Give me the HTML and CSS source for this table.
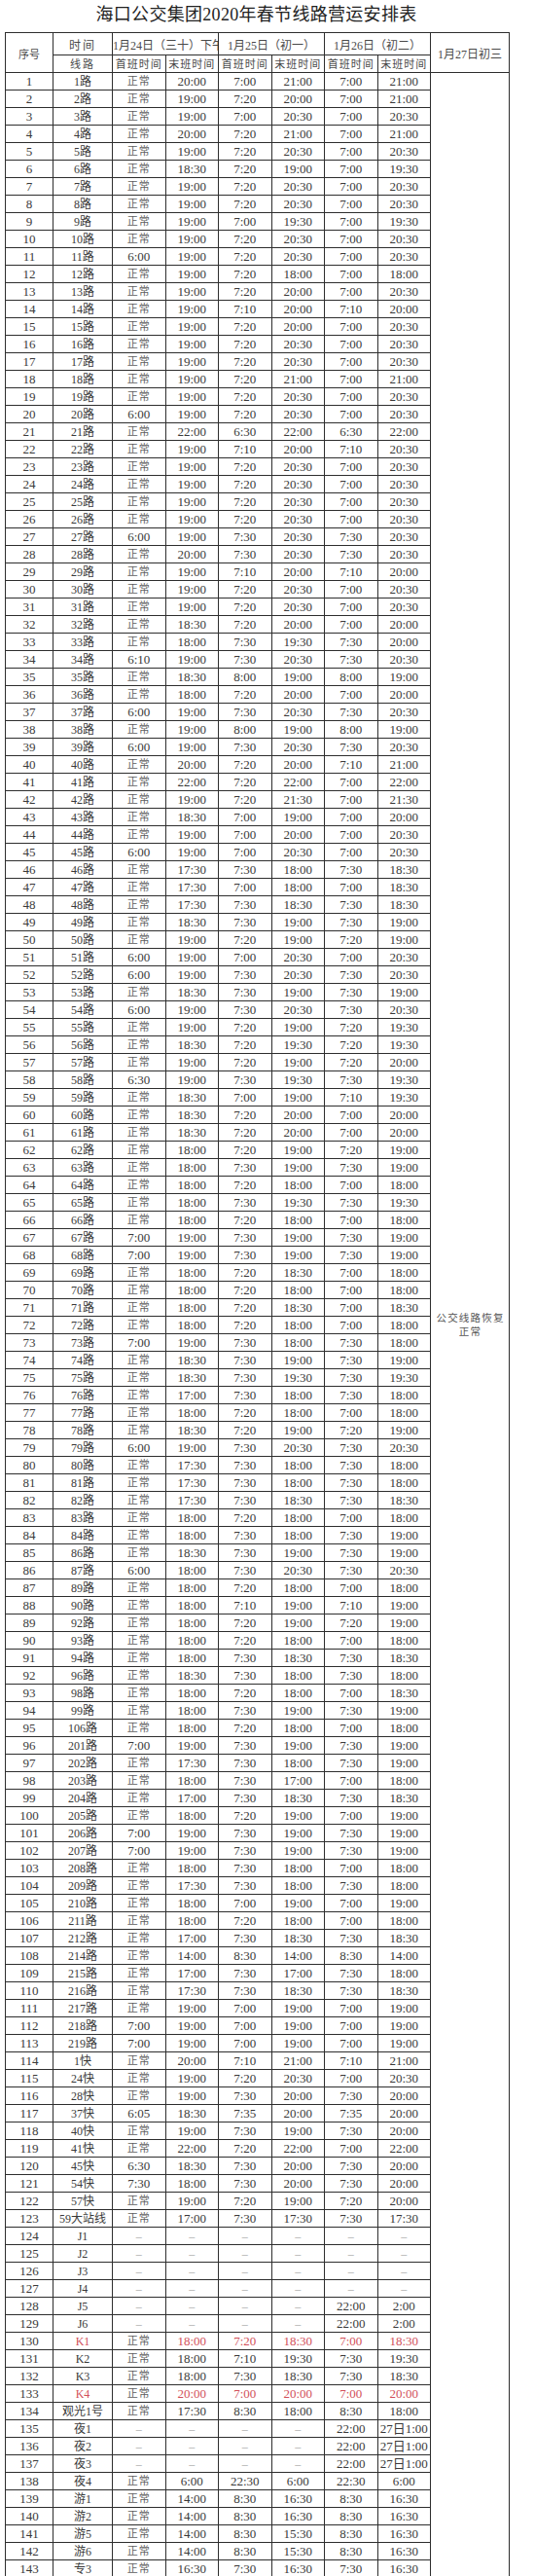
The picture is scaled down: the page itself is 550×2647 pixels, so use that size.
FILE: index.html
```html
<!DOCTYPE html>
<html lang="zh-CN">
<head>
<meta charset="utf-8">
<title>海口公交集团2020年春节线路营运安排表</title>
<link rel="stylesheet" href="styles.css">
</head>
<body>
<div class="sheet">
<h1 class="title">海口公交集团2020年春节线路营运安排表</h1>
<table class="grid">
<colgroup><col class="w-no"><col class="w-route"><col class="w-t"><col class="w-t"><col class="w-t"><col class="w-t"><col class="w-t"><col class="w-t"><col class="w-last"></colgroup>
<thead>
<tr class="h1"><th rowspan="2" class="hd-no">序号</th><th class="hd-sp">时间</th><th colspan="2" class="hd-day clip">1月24日（三十）下午</th><th colspan="2" class="hd-day">1月25日（初一）</th><th colspan="2" class="hd-day">1月26日（初二）</th><th rowspan="2" class="hd-day mid">1月27日初三</th></tr>
<tr class="h2"><th class="hd-sp">线路</th><th class="hd-sub">首班时间</th><th class="hd-sub">末班时间</th><th class="hd-sub">首班时间</th><th class="hd-sub">末班时间</th><th class="hd-sub">首班时间</th><th class="hd-sub">末班时间</th></tr>
</thead>
<tbody>
<tr><td>1</td><td class="rt">1路</td><td class="n">正常</td><td>20:00</td><td>7:00</td><td>21:00</td><td>7:00</td><td>21:00</td><td class="note" rowspan="143">公交线路恢复<br>正常</td></tr>
<tr><td>2</td><td class="rt">2路</td><td class="n">正常</td><td>19:00</td><td>7:20</td><td>20:00</td><td>7:00</td><td>21:00</td></tr>
<tr><td>3</td><td class="rt">3路</td><td class="n">正常</td><td>19:00</td><td>7:00</td><td>20:30</td><td>7:00</td><td>20:30</td></tr>
<tr><td>4</td><td class="rt">4路</td><td class="n">正常</td><td>20:00</td><td>7:20</td><td>21:00</td><td>7:00</td><td>21:00</td></tr>
<tr><td>5</td><td class="rt">5路</td><td class="n">正常</td><td>19:00</td><td>7:20</td><td>20:30</td><td>7:00</td><td>20:30</td></tr>
<tr><td>6</td><td class="rt">6路</td><td class="n">正常</td><td>18:30</td><td>7:20</td><td>19:00</td><td>7:00</td><td>19:30</td></tr>
<tr><td>7</td><td class="rt">7路</td><td class="n">正常</td><td>19:00</td><td>7:20</td><td>20:30</td><td>7:00</td><td>20:30</td></tr>
<tr><td>8</td><td class="rt">8路</td><td class="n">正常</td><td>19:00</td><td>7:20</td><td>20:30</td><td>7:00</td><td>20:30</td></tr>
<tr><td>9</td><td class="rt">9路</td><td class="n">正常</td><td>19:00</td><td>7:00</td><td>19:30</td><td>7:00</td><td>19:30</td></tr>
<tr><td>10</td><td class="rt">10路</td><td class="n">正常</td><td>19:00</td><td>7:20</td><td>20:30</td><td>7:00</td><td>20:30</td></tr>
<tr><td>11</td><td class="rt">11路</td><td>6:00</td><td>19:00</td><td>7:20</td><td>20:30</td><td>7:00</td><td>20:30</td></tr>
<tr><td>12</td><td class="rt">12路</td><td class="n">正常</td><td>19:00</td><td>7:20</td><td>18:00</td><td>7:00</td><td>18:00</td></tr>
<tr><td>13</td><td class="rt">13路</td><td class="n">正常</td><td>19:00</td><td>7:20</td><td>20:00</td><td>7:00</td><td>20:30</td></tr>
<tr><td>14</td><td class="rt">14路</td><td class="n">正常</td><td>19:00</td><td>7:10</td><td>20:00</td><td>7:10</td><td>20:00</td></tr>
<tr><td>15</td><td class="rt">15路</td><td class="n">正常</td><td>19:00</td><td>7:20</td><td>20:00</td><td>7:00</td><td>20:30</td></tr>
<tr><td>16</td><td class="rt">16路</td><td class="n">正常</td><td>19:00</td><td>7:20</td><td>20:30</td><td>7:00</td><td>20:30</td></tr>
<tr><td>17</td><td class="rt">17路</td><td class="n">正常</td><td>19:00</td><td>7:20</td><td>20:30</td><td>7:00</td><td>20:30</td></tr>
<tr><td>18</td><td class="rt">18路</td><td class="n">正常</td><td>19:00</td><td>7:20</td><td>21:00</td><td>7:00</td><td>21:00</td></tr>
<tr><td>19</td><td class="rt">19路</td><td class="n">正常</td><td>19:00</td><td>7:20</td><td>20:30</td><td>7:00</td><td>20:30</td></tr>
<tr><td>20</td><td class="rt">20路</td><td>6:00</td><td>19:00</td><td>7:20</td><td>20:30</td><td>7:00</td><td>20:30</td></tr>
<tr><td>21</td><td class="rt">21路</td><td class="n">正常</td><td>22:00</td><td>6:30</td><td>22:00</td><td>6:30</td><td>22:00</td></tr>
<tr><td>22</td><td class="rt">22路</td><td class="n">正常</td><td>19:00</td><td>7:10</td><td>20:00</td><td>7:10</td><td>20:30</td></tr>
<tr><td>23</td><td class="rt">23路</td><td class="n">正常</td><td>19:00</td><td>7:20</td><td>20:30</td><td>7:00</td><td>20:30</td></tr>
<tr><td>24</td><td class="rt">24路</td><td class="n">正常</td><td>19:00</td><td>7:20</td><td>20:30</td><td>7:00</td><td>20:30</td></tr>
<tr><td>25</td><td class="rt">25路</td><td class="n">正常</td><td>19:00</td><td>7:20</td><td>20:30</td><td>7:00</td><td>20:30</td></tr>
<tr><td>26</td><td class="rt">26路</td><td class="n">正常</td><td>19:00</td><td>7:20</td><td>20:30</td><td>7:00</td><td>20:30</td></tr>
<tr><td>27</td><td class="rt">27路</td><td>6:00</td><td>19:00</td><td>7:30</td><td>20:30</td><td>7:30</td><td>20:30</td></tr>
<tr><td>28</td><td class="rt">28路</td><td class="n">正常</td><td>20:00</td><td>7:30</td><td>20:30</td><td>7:30</td><td>20:30</td></tr>
<tr><td>29</td><td class="rt">29路</td><td class="n">正常</td><td>19:00</td><td>7:10</td><td>20:00</td><td>7:10</td><td>20:00</td></tr>
<tr><td>30</td><td class="rt">30路</td><td class="n">正常</td><td>19:00</td><td>7:20</td><td>20:30</td><td>7:00</td><td>20:30</td></tr>
<tr><td>31</td><td class="rt">31路</td><td class="n">正常</td><td>19:00</td><td>7:20</td><td>20:30</td><td>7:00</td><td>20:30</td></tr>
<tr><td>32</td><td class="rt">32路</td><td class="n">正常</td><td>18:30</td><td>7:20</td><td>20:00</td><td>7:00</td><td>20:00</td></tr>
<tr><td>33</td><td class="rt">33路</td><td class="n">正常</td><td>18:00</td><td>7:30</td><td>19:30</td><td>7:30</td><td>20:00</td></tr>
<tr><td>34</td><td class="rt">34路</td><td>6:10</td><td>19:00</td><td>7:30</td><td>20:30</td><td>7:30</td><td>20:30</td></tr>
<tr><td>35</td><td class="rt">35路</td><td class="n">正常</td><td>18:30</td><td>8:00</td><td>19:00</td><td>8:00</td><td>19:00</td></tr>
<tr><td>36</td><td class="rt">36路</td><td class="n">正常</td><td>18:00</td><td>7:20</td><td>20:00</td><td>7:00</td><td>20:00</td></tr>
<tr><td>37</td><td class="rt">37路</td><td>6:00</td><td>19:00</td><td>7:30</td><td>20:30</td><td>7:30</td><td>20:30</td></tr>
<tr><td>38</td><td class="rt">38路</td><td class="n">正常</td><td>19:00</td><td>8:00</td><td>19:00</td><td>8:00</td><td>19:00</td></tr>
<tr><td>39</td><td class="rt">39路</td><td>6:00</td><td>19:00</td><td>7:30</td><td>20:30</td><td>7:30</td><td>20:30</td></tr>
<tr><td>40</td><td class="rt">40路</td><td class="n">正常</td><td>20:00</td><td>7:20</td><td>20:00</td><td>7:10</td><td>21:00</td></tr>
<tr><td>41</td><td class="rt">41路</td><td class="n">正常</td><td>22:00</td><td>7:20</td><td>22:00</td><td>7:00</td><td>22:00</td></tr>
<tr><td>42</td><td class="rt">42路</td><td class="n">正常</td><td>19:00</td><td>7:20</td><td>21:30</td><td>7:00</td><td>21:30</td></tr>
<tr><td>43</td><td class="rt">43路</td><td class="n">正常</td><td>18:30</td><td>7:00</td><td>19:00</td><td>7:00</td><td>20:00</td></tr>
<tr><td>44</td><td class="rt">44路</td><td class="n">正常</td><td>19:00</td><td>7:00</td><td>20:00</td><td>7:00</td><td>20:30</td></tr>
<tr><td>45</td><td class="rt">45路</td><td>6:00</td><td>19:00</td><td>7:00</td><td>20:30</td><td>7:00</td><td>20:30</td></tr>
<tr><td>46</td><td class="rt">46路</td><td class="n">正常</td><td>17:30</td><td>7:30</td><td>18:00</td><td>7:30</td><td>18:30</td></tr>
<tr><td>47</td><td class="rt">47路</td><td class="n">正常</td><td>17:30</td><td>7:00</td><td>18:00</td><td>7:00</td><td>18:30</td></tr>
<tr><td>48</td><td class="rt">48路</td><td class="n">正常</td><td>17:30</td><td>7:30</td><td>18:30</td><td>7:30</td><td>18:30</td></tr>
<tr><td>49</td><td class="rt">49路</td><td class="n">正常</td><td>18:30</td><td>7:30</td><td>19:00</td><td>7:30</td><td>19:00</td></tr>
<tr><td>50</td><td class="rt">50路</td><td class="n">正常</td><td>19:00</td><td>7:20</td><td>19:00</td><td>7:20</td><td>19:00</td></tr>
<tr><td>51</td><td class="rt">51路</td><td>6:00</td><td>19:00</td><td>7:00</td><td>20:30</td><td>7:00</td><td>20:30</td></tr>
<tr><td>52</td><td class="rt">52路</td><td>6:00</td><td>19:00</td><td>7:30</td><td>20:30</td><td>7:30</td><td>20:30</td></tr>
<tr><td>53</td><td class="rt">53路</td><td class="n">正常</td><td>18:30</td><td>7:30</td><td>19:00</td><td>7:30</td><td>19:00</td></tr>
<tr><td>54</td><td class="rt">54路</td><td>6:00</td><td>19:00</td><td>7:30</td><td>20:30</td><td>7:30</td><td>20:30</td></tr>
<tr><td>55</td><td class="rt">55路</td><td class="n">正常</td><td>19:00</td><td>7:20</td><td>19:00</td><td>7:20</td><td>19:30</td></tr>
<tr><td>56</td><td class="rt">56路</td><td class="n">正常</td><td>18:30</td><td>7:20</td><td>19:30</td><td>7:20</td><td>19:30</td></tr>
<tr><td>57</td><td class="rt">57路</td><td class="n">正常</td><td>19:00</td><td>7:20</td><td>19:00</td><td>7:20</td><td>20:00</td></tr>
<tr><td>58</td><td class="rt">58路</td><td>6:30</td><td>19:00</td><td>7:30</td><td>19:30</td><td>7:30</td><td>19:30</td></tr>
<tr><td>59</td><td class="rt">59路</td><td class="n">正常</td><td>18:30</td><td>7:00</td><td>19:00</td><td>7:10</td><td>19:30</td></tr>
<tr><td>60</td><td class="rt">60路</td><td class="n">正常</td><td>18:30</td><td>7:20</td><td>20:00</td><td>7:00</td><td>20:00</td></tr>
<tr><td>61</td><td class="rt">61路</td><td class="n">正常</td><td>18:30</td><td>7:20</td><td>20:00</td><td>7:00</td><td>20:00</td></tr>
<tr><td>62</td><td class="rt">62路</td><td class="n">正常</td><td>18:00</td><td>7:20</td><td>19:00</td><td>7:20</td><td>19:00</td></tr>
<tr><td>63</td><td class="rt">63路</td><td class="n">正常</td><td>18:00</td><td>7:30</td><td>19:00</td><td>7:30</td><td>19:00</td></tr>
<tr><td>64</td><td class="rt">64路</td><td class="n">正常</td><td>18:00</td><td>7:20</td><td>18:00</td><td>7:00</td><td>18:00</td></tr>
<tr><td>65</td><td class="rt">65路</td><td class="n">正常</td><td>18:00</td><td>7:30</td><td>19:30</td><td>7:30</td><td>19:30</td></tr>
<tr><td>66</td><td class="rt">66路</td><td class="n">正常</td><td>18:00</td><td>7:20</td><td>18:00</td><td>7:00</td><td>18:00</td></tr>
<tr><td>67</td><td class="rt">67路</td><td>7:00</td><td>19:00</td><td>7:30</td><td>19:00</td><td>7:30</td><td>19:00</td></tr>
<tr><td>68</td><td class="rt">68路</td><td>7:00</td><td>19:00</td><td>7:30</td><td>19:00</td><td>7:30</td><td>19:00</td></tr>
<tr><td>69</td><td class="rt">69路</td><td class="n">正常</td><td>18:00</td><td>7:20</td><td>18:30</td><td>7:00</td><td>18:00</td></tr>
<tr><td>70</td><td class="rt">70路</td><td class="n">正常</td><td>18:00</td><td>7:20</td><td>18:00</td><td>7:00</td><td>18:00</td></tr>
<tr><td>71</td><td class="rt">71路</td><td class="n">正常</td><td>18:00</td><td>7:20</td><td>18:30</td><td>7:00</td><td>18:30</td></tr>
<tr><td>72</td><td class="rt">72路</td><td class="n">正常</td><td>18:00</td><td>7:20</td><td>18:00</td><td>7:00</td><td>18:00</td></tr>
<tr><td>73</td><td class="rt">73路</td><td>7:00</td><td>19:00</td><td>7:30</td><td>18:00</td><td>7:30</td><td>18:00</td></tr>
<tr><td>74</td><td class="rt">74路</td><td class="n">正常</td><td>18:30</td><td>7:30</td><td>19:00</td><td>7:30</td><td>19:00</td></tr>
<tr><td>75</td><td class="rt">75路</td><td class="n">正常</td><td>18:30</td><td>7:30</td><td>19:30</td><td>7:30</td><td>19:30</td></tr>
<tr><td>76</td><td class="rt">76路</td><td class="n">正常</td><td>17:00</td><td>7:30</td><td>18:00</td><td>7:30</td><td>18:00</td></tr>
<tr><td>77</td><td class="rt">77路</td><td class="n">正常</td><td>18:00</td><td>7:20</td><td>18:00</td><td>7:00</td><td>18:00</td></tr>
<tr><td>78</td><td class="rt">78路</td><td class="n">正常</td><td>18:30</td><td>7:20</td><td>19:00</td><td>7:20</td><td>19:00</td></tr>
<tr><td>79</td><td class="rt">79路</td><td>6:00</td><td>19:00</td><td>7:30</td><td>20:30</td><td>7:30</td><td>20:30</td></tr>
<tr><td>80</td><td class="rt">80路</td><td class="n">正常</td><td>17:30</td><td>7:30</td><td>18:00</td><td>7:30</td><td>18:00</td></tr>
<tr><td>81</td><td class="rt">81路</td><td class="n">正常</td><td>17:30</td><td>7:30</td><td>18:00</td><td>7:30</td><td>18:00</td></tr>
<tr><td>82</td><td class="rt">82路</td><td class="n">正常</td><td>17:30</td><td>7:30</td><td>18:30</td><td>7:30</td><td>18:30</td></tr>
<tr><td>83</td><td class="rt">83路</td><td class="n">正常</td><td>18:00</td><td>7:20</td><td>18:00</td><td>7:00</td><td>18:00</td></tr>
<tr><td>84</td><td class="rt">84路</td><td class="n">正常</td><td>18:00</td><td>7:30</td><td>18:00</td><td>7:30</td><td>19:00</td></tr>
<tr><td>85</td><td class="rt">86路</td><td class="n">正常</td><td>18:30</td><td>7:30</td><td>19:00</td><td>7:30</td><td>19:00</td></tr>
<tr><td>86</td><td class="rt">87路</td><td>6:00</td><td>18:00</td><td>7:30</td><td>20:30</td><td>7:30</td><td>20:30</td></tr>
<tr><td>87</td><td class="rt">89路</td><td class="n">正常</td><td>18:00</td><td>7:20</td><td>18:00</td><td>7:00</td><td>18:00</td></tr>
<tr><td>88</td><td class="rt">90路</td><td class="n">正常</td><td>18:00</td><td>7:10</td><td>19:00</td><td>7:10</td><td>19:00</td></tr>
<tr><td>89</td><td class="rt">92路</td><td class="n">正常</td><td>18:00</td><td>7:20</td><td>19:00</td><td>7:20</td><td>19:00</td></tr>
<tr><td>90</td><td class="rt">93路</td><td class="n">正常</td><td>18:00</td><td>7:20</td><td>18:00</td><td>7:00</td><td>18:00</td></tr>
<tr><td>91</td><td class="rt">94路</td><td class="n">正常</td><td>18:00</td><td>7:30</td><td>18:30</td><td>7:30</td><td>18:30</td></tr>
<tr><td>92</td><td class="rt">96路</td><td class="n">正常</td><td>18:30</td><td>7:30</td><td>18:00</td><td>7:30</td><td>18:00</td></tr>
<tr><td>93</td><td class="rt">98路</td><td class="n">正常</td><td>18:00</td><td>7:20</td><td>18:00</td><td>7:00</td><td>18:30</td></tr>
<tr><td>94</td><td class="rt">99路</td><td class="n">正常</td><td>18:00</td><td>7:30</td><td>19:00</td><td>7:30</td><td>19:00</td></tr>
<tr><td>95</td><td class="rt">106路</td><td class="n">正常</td><td>18:00</td><td>7:20</td><td>18:00</td><td>7:00</td><td>18:00</td></tr>
<tr><td>96</td><td class="rt">201路</td><td>7:00</td><td>19:00</td><td>7:30</td><td>19:00</td><td>7:30</td><td>19:00</td></tr>
<tr><td>97</td><td class="rt">202路</td><td class="n">正常</td><td>17:30</td><td>7:30</td><td>18:00</td><td>7:30</td><td>19:00</td></tr>
<tr><td>98</td><td class="rt">203路</td><td class="n">正常</td><td>18:00</td><td>7:30</td><td>17:00</td><td>7:00</td><td>18:00</td></tr>
<tr><td>99</td><td class="rt">204路</td><td class="n">正常</td><td>17:00</td><td>7:30</td><td>18:30</td><td>7:30</td><td>18:30</td></tr>
<tr><td>100</td><td class="rt">205路</td><td class="n">正常</td><td>18:00</td><td>7:20</td><td>19:00</td><td>7:00</td><td>19:00</td></tr>
<tr><td>101</td><td class="rt">206路</td><td>7:00</td><td>19:00</td><td>7:30</td><td>19:00</td><td>7:30</td><td>19:00</td></tr>
<tr><td>102</td><td class="rt">207路</td><td>7:00</td><td>19:00</td><td>7:30</td><td>19:00</td><td>7:30</td><td>19:00</td></tr>
<tr><td>103</td><td class="rt">208路</td><td class="n">正常</td><td>18:00</td><td>7:30</td><td>18:00</td><td>7:00</td><td>18:00</td></tr>
<tr><td>104</td><td class="rt">209路</td><td class="n">正常</td><td>17:30</td><td>7:30</td><td>18:00</td><td>7:30</td><td>18:00</td></tr>
<tr><td>105</td><td class="rt">210路</td><td class="n">正常</td><td>18:00</td><td>7:00</td><td>19:00</td><td>7:00</td><td>19:00</td></tr>
<tr><td>106</td><td class="rt">211路</td><td class="n">正常</td><td>18:00</td><td>7:20</td><td>18:00</td><td>7:00</td><td>18:00</td></tr>
<tr><td>107</td><td class="rt">212路</td><td class="n">正常</td><td>17:00</td><td>7:30</td><td>18:30</td><td>7:30</td><td>18:30</td></tr>
<tr><td>108</td><td class="rt">214路</td><td class="n">正常</td><td>14:00</td><td>8:30</td><td>14:00</td><td>8:30</td><td>14:00</td></tr>
<tr><td>109</td><td class="rt">215路</td><td class="n">正常</td><td>17:00</td><td>7:30</td><td>17:00</td><td>7:30</td><td>18:00</td></tr>
<tr><td>110</td><td class="rt">216路</td><td class="n">正常</td><td>17:30</td><td>7:30</td><td>18:30</td><td>7:30</td><td>18:30</td></tr>
<tr><td>111</td><td class="rt">217路</td><td class="n">正常</td><td>19:00</td><td>7:00</td><td>19:00</td><td>7:00</td><td>19:00</td></tr>
<tr><td>112</td><td class="rt">218路</td><td>7:00</td><td>19:00</td><td>7:00</td><td>19:00</td><td>7:00</td><td>19:00</td></tr>
<tr><td>113</td><td class="rt">219路</td><td>7:00</td><td>19:00</td><td>7:00</td><td>19:00</td><td>7:00</td><td>19:00</td></tr>
<tr><td>114</td><td class="rt">1快</td><td class="n">正常</td><td>20:00</td><td>7:10</td><td>21:00</td><td>7:10</td><td>21:00</td></tr>
<tr><td>115</td><td class="rt">24快</td><td class="n">正常</td><td>19:00</td><td>7:20</td><td>20:30</td><td>7:00</td><td>20:30</td></tr>
<tr><td>116</td><td class="rt">28快</td><td class="n">正常</td><td>19:00</td><td>7:30</td><td>20:00</td><td>7:30</td><td>20:00</td></tr>
<tr><td>117</td><td class="rt">37快</td><td>6:05</td><td>18:30</td><td>7:35</td><td>20:00</td><td>7:35</td><td>20:00</td></tr>
<tr><td>118</td><td class="rt">40快</td><td class="n">正常</td><td>19:00</td><td>7:30</td><td>19:00</td><td>7:30</td><td>20:00</td></tr>
<tr><td>119</td><td class="rt">41快</td><td class="n">正常</td><td>22:00</td><td>7:20</td><td>22:00</td><td>7:00</td><td>22:00</td></tr>
<tr><td>120</td><td class="rt">45快</td><td>6:30</td><td>18:30</td><td>7:30</td><td>20:00</td><td>7:30</td><td>20:00</td></tr>
<tr><td>121</td><td class="rt">54快</td><td>7:30</td><td>18:00</td><td>7:30</td><td>20:00</td><td>7:30</td><td>20:00</td></tr>
<tr><td>122</td><td class="rt">57快</td><td class="n">正常</td><td>19:00</td><td>7:20</td><td>19:00</td><td>7:20</td><td>20:00</td></tr>
<tr><td>123</td><td class="rt">59大站线</td><td class="n">正常</td><td>17:00</td><td>7:30</td><td>17:30</td><td>7:30</td><td>17:30</td></tr>
<tr><td>124</td><td class="rt">J1</td><td class="d">–</td><td class="d">–</td><td class="d">–</td><td class="d">–</td><td class="d">–</td><td class="d">–</td></tr>
<tr><td>125</td><td class="rt">J2</td><td class="d">–</td><td class="d">–</td><td class="d">–</td><td class="d">–</td><td class="d">–</td><td class="d">–</td></tr>
<tr><td>126</td><td class="rt">J3</td><td class="d">–</td><td class="d">–</td><td class="d">–</td><td class="d">–</td><td class="d">–</td><td class="d">–</td></tr>
<tr><td>127</td><td class="rt">J4</td><td class="d">–</td><td class="d">–</td><td class="d">–</td><td class="d">–</td><td class="d">–</td><td class="d">–</td></tr>
<tr><td>128</td><td class="rt">J5</td><td class="d">–</td><td class="d">–</td><td class="d">–</td><td class="d">–</td><td>22:00</td><td>2:00</td></tr>
<tr><td>129</td><td class="rt">J6</td><td class="d">–</td><td class="d">–</td><td class="d">–</td><td class="d">–</td><td>22:00</td><td>2:00</td></tr>
<tr><td>130</td><td class="rt r">K1</td><td class="n">正常</td><td class="r">18:00</td><td class="r">7:20</td><td class="r">18:30</td><td class="r">7:00</td><td class="r">18:30</td></tr>
<tr><td>131</td><td class="rt">K2</td><td class="n">正常</td><td>18:00</td><td>7:10</td><td>19:30</td><td>7:30</td><td>19:30</td></tr>
<tr><td>132</td><td class="rt">K3</td><td class="n">正常</td><td>18:00</td><td>7:30</td><td>18:30</td><td>7:30</td><td>18:30</td></tr>
<tr><td>133</td><td class="rt r">K4</td><td class="n">正常</td><td class="r">20:00</td><td class="r">7:00</td><td class="r">20:00</td><td class="r">7:00</td><td class="r">20:00</td></tr>
<tr><td>134</td><td class="rt">观光1号</td><td class="n">正常</td><td>17:30</td><td>8:30</td><td>18:00</td><td>8:30</td><td>18:00</td></tr>
<tr><td>135</td><td class="rt">夜1</td><td class="d">–</td><td class="d">–</td><td class="d">–</td><td class="d">–</td><td>22:00</td><td>27日1:00</td></tr>
<tr><td>136</td><td class="rt">夜2</td><td class="d">–</td><td class="d">–</td><td class="d">–</td><td class="d">–</td><td>22:00</td><td>27日1:00</td></tr>
<tr><td>137</td><td class="rt">夜3</td><td class="d">–</td><td class="d">–</td><td class="d">–</td><td class="d">–</td><td>22:00</td><td>27日1:00</td></tr>
<tr><td>138</td><td class="rt">夜4</td><td class="n">正常</td><td>6:00</td><td>22:30</td><td>6:00</td><td>22:30</td><td>6:00</td></tr>
<tr><td>139</td><td class="rt">游1</td><td class="n">正常</td><td>14:00</td><td>8:30</td><td>16:30</td><td>8:30</td><td>16:30</td></tr>
<tr><td>140</td><td class="rt">游2</td><td class="n">正常</td><td>14:00</td><td>8:30</td><td>16:30</td><td>8:30</td><td>16:30</td></tr>
<tr><td>141</td><td class="rt">游5</td><td class="n">正常</td><td>14:00</td><td>8:30</td><td>15:30</td><td>8:30</td><td>16:30</td></tr>
<tr><td>142</td><td class="rt">游6</td><td class="n">正常</td><td>14:00</td><td>8:30</td><td>15:30</td><td>8:30</td><td>16:30</td></tr>
<tr><td>143</td><td class="rt">专3</td><td class="n">正常</td><td>16:30</td><td>7:30</td><td>16:30</td><td>7:30</td><td>16:30</td></tr>
</tbody>
</table>
</div>
</body>
</html>
```

FILE: styles.css
```css
html, body {
  margin: 0;
  padding: 0;
  background: #ffffff;
}

body {
  font-family: "Liberation Serif", "Noto Sans CJK SC", serif;
  color: #333333;
}

.sheet {
  width: 517px;
  margin-left: 5px;
}

.title {
  margin: 0;
  padding-top: 3px;
  height: 30px;
  font-size: 18px;
  line-height: 24px;
  font-weight: normal;
  text-align: center;
  color: #222222;
  letter-spacing: 0.3px;
}

.grid {
  border-collapse: collapse;
  table-layout: fixed;
  width: 517px;
}

.w-no { width: 49px; }
.w-route { width: 61px; }
.w-t { width: 54.5px; }
.w-last { width: 81px; }

.grid th,
.grid td {
  border: 1px solid #2e2e2e;
  padding: 0;
  text-align: center;
  white-space: nowrap;
  overflow: hidden;
  font-weight: normal;
  vertical-align: middle;
}

.grid td {
  height: 17px;
  line-height: 13px;
  font-size: 13px;
  color: #3a3a3a;
}

.grid .h1 th {
  height: 20px;
  vertical-align: bottom;
  line-height: 13px;
  padding-bottom: 2px;
  font-size: 12px;
  color: #4a4a4a;
}

.grid .h2 th {
  height: 17px;
  line-height: 12px;
  font-size: 11px;
  color: #4a4a4a;
}

.grid .h1 th.hd-no {
  font-size: 11px;
  line-height: 12px;
  vertical-align: middle;
  padding: 4px 0 0;
}

.grid .hd-sp {
  font-size: 11px;
  letter-spacing: 2px;
}

.grid .hd-sub {
  letter-spacing: 1px;
}

.grid .h1 th.mid {
  vertical-align: middle;
  line-height: 12px;
  padding: 3px 0 0;
}

.grid .clip {
  text-overflow: clip;
}

.grid td.rt {
  font-size: 12px;
  line-height: 12px;
  padding-top: 1px;
  height: 16px;
}

.grid td.n {
  font-size: 11px;
  line-height: 11px;
  letter-spacing: 1px;
  color: #5e5e5e;
}

.grid td.d {
  color: #a8a8a8;
  font-size: 12px;
  line-height: 12px;
}

.grid td.r {
  color: #d2505a;
}

.grid td.note {
  white-space: normal;
  vertical-align: middle;
  font-size: 10.5px;
  line-height: 14px;
  letter-spacing: 1.2px;
  color: #555555;
  padding-left: 1px;
}
```
